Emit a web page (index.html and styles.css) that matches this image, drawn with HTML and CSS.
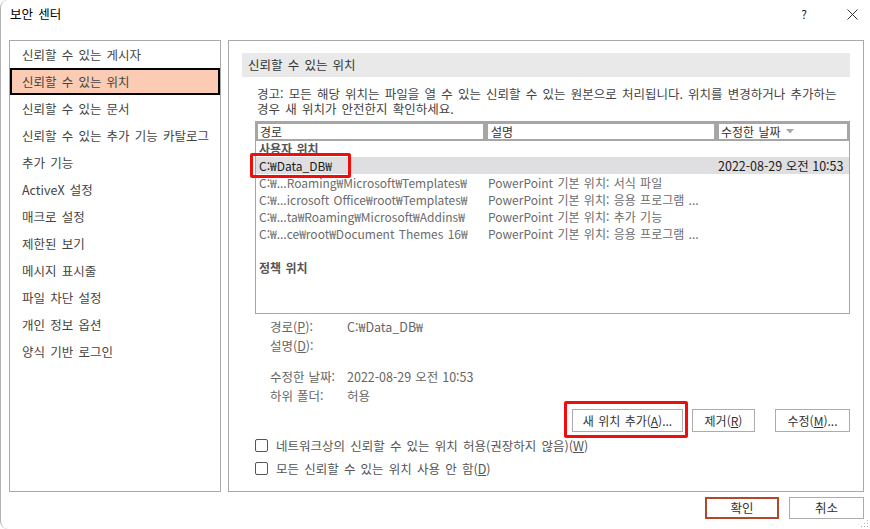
FILE: index.html
```html
<!DOCTYPE html>
<html lang="ko">
<head>
<meta charset="utf-8">
<title>보안 센터</title>
<link rel="stylesheet" href="styles.css">
</head>
<body>
<div class="window">
  <div class="titlebar">
    <span class="title">보안 센터</span>
    <span class="tb-buttons">
      <span class="tb-help">?</span>
      <svg class="tb-close" width="11" height="11" viewBox="0 0 11 11"><path d="M0.5 0.5 L10.5 10.5 M10.5 0.5 L0.5 10.5" stroke="#333" stroke-width="1" fill="none"/></svg>
    </span>
  </div>

  <div class="main">
    <ul class="nav">
      <li class="nav-item">신뢰할 수 있는 게시자</li>
      <li class="nav-item is-active">신뢰할 수 있는 위치</li>
      <li class="nav-item">신뢰할 수 있는 문서</li>
      <li class="nav-item">신뢰할 수 있는 추가 기능 카탈로그</li>
      <li class="nav-item">추가 기능</li>
      <li class="nav-item">ActiveX 설정</li>
      <li class="nav-item">매크로 설정</li>
      <li class="nav-item">제한된 보기</li>
      <li class="nav-item">메시지 표시줄</li>
      <li class="nav-item">파일 차단 설정</li>
      <li class="nav-item">개인 정보 옵션</li>
      <li class="nav-item">양식 기반 로그인</li>
    </ul>

    <section class="pane">
      <div class="pane-header">신뢰할 수 있는 위치</div>
      <div class="warning">
        <span class="warning-line">경고: 모든 해당 위치는 파일을 열 수 있는 신뢰할 수 있는 원본으로 처리됩니다. 위치를 변경하거나 추가하는</span>
        <span class="warning-line">경우 새 위치가 안전한지 확인하세요.</span>
      </div>

      <div class="list">
        <div class="list-head">
          <div class="th th-path">경로</div>
          <div class="th th-desc">설명</div>
          <div class="th th-date">수정한 날짜 <svg class="caret" width="8" height="5" viewBox="0 0 8 5"><path d="M0 0 H8 L4 4.5 Z" fill="#a8a8a8"/></svg></div>
        </div>
        <div class="list-body">
          <div class="group">사용자 위치</div>
          <div class="row is-selected">
            <span class="c-path">C:₩Data_DB₩</span><span class="c-desc"></span><span class="c-date">2022-08-29 오전 10:53</span>
            <span class="mark mark-row"></span>
          </div>
          <div class="row"><span class="c-path">C:₩...Roaming₩Microsoft₩Templates₩</span><span class="c-desc">PowerPoint 기본 위치: 서식 파일</span><span class="c-date"></span></div>
          <div class="row"><span class="c-path">C:₩...icrosoft Office₩root₩Templates₩</span><span class="c-desc">PowerPoint 기본 위치: 응용 프로그램 ...</span><span class="c-date"></span></div>
          <div class="row"><span class="c-path">C:₩...ta₩Roaming₩Microsoft₩Addins₩</span><span class="c-desc">PowerPoint 기본 위치: 추가 기능</span><span class="c-date"></span></div>
          <div class="row"><span class="c-path">C:₩...ce₩root₩Document Themes 16₩</span><span class="c-desc">PowerPoint 기본 위치: 응용 프로그램 ...</span><span class="c-date"></span></div>
          <div class="spacer"></div>
          <div class="group">정책 위치</div>
        </div>
      </div>

      <div class="details">
        <span class="d-label">경로(<u>P</u>):</span><span class="d-value">C:₩Data_DB₩</span>
        <span class="d-label">설명(<u>D</u>):</span><span class="d-value"></span>
        <span class="d-gap"></span>
        <span class="d-label">수정한 날짜:</span><span class="d-value">2022-08-29 오전 10:53</span>
        <span class="d-label">하위 폴더:</span><span class="d-value">허용</span>
      </div>

      <div class="actions">
        <button class="btn btn-add">새 위치 추가(<u>A</u>)...<span class="mark mark-btn"></span></button>
        <button class="btn btn-remove">제거(<u>R</u>)</button>
        <button class="btn btn-edit">수정(<u>M</u>)...</button>
      </div>

      <div class="checks">
        <label class="check"><span class="box"></span>네트워크상의 신뢰할 수 있는 위치 허용(권장하지 않음)(<u>W</u>)</label>
        <label class="check"><span class="box"></span>모든 신뢰할 수 있는 위치 사용 안 함(<u>D</u>)</label>
      </div>
    </section>
  </div>

  <div class="footer">
    <button class="btn btn-ok">확인</button>
    <button class="btn btn-cancel">취소</button>
  </div>

  <svg class="grip" width="8" height="8" viewBox="0 0 8 8">
    <rect x="6" y="0" width="1" height="1" fill="#b0b0b0"/>
    <rect x="3" y="3" width="1" height="1" fill="#b0b0b0"/>
    <rect x="6" y="3" width="1" height="1" fill="#b0b0b0"/>
    <rect x="0" y="6" width="1" height="1" fill="#b0b0b0"/>
    <rect x="3" y="6" width="1" height="1" fill="#b0b0b0"/>
    <rect x="6" y="6" width="1" height="1" fill="#b0b0b0"/>
  </svg>
</div>
</body>
</html>
```

FILE: styles.css
```css
* { box-sizing: border-box; }

html, body {
  margin: 0;
  padding: 0;
  background: #ffffff;
}

body {
  font-family: "Noto Sans CJK KR", "Noto Sans", sans-serif;
  font-size: 12.5px;
  word-spacing: 1.7px;
  color: #444;
}

.window {
  position: relative;
  width: 870px;
  height: 529px;
  overflow: hidden;
  background: #fff;
  border-left: 1px solid #b4b4b4;
  border-top-left-radius: 8px;
  border-bottom-left-radius: 8px;
}

/* Title bar */
.titlebar {
  height: 40px;
  display: flex;
  justify-content: space-between;
  align-items: flex-start;
  padding: 6px 12px 0 9px;
  line-height: 16px;
}
.title { color: #000; }
.tb-buttons {
  display: flex;
  align-items: center;
  gap: 40px;
  height: 16px;
}
.tb-help { color: #222; font-size: 12px; }
.tb-close { display: block; margin-top: 1px; }

/* Main */
.main {
  display: flex;
  gap: 7px;
  padding-left: 8px;
}

.nav {
  list-style: none;
  margin: 0;
  padding: 0;
  width: 212px;
  height: 452px;
  border: 1px solid #a9a9a9;
  flex: none;
}
.nav-item {
  height: 27px;
  line-height: 27px;
  padding-left: 12px;
  color: #444;
  white-space: nowrap;
}
.nav-item.is-active {
  background: #fbcbb3;
  border: 2px solid #000;
  padding-left: 10px;
  line-height: 23px;
}

.pane {
  width: 636px;
  height: 452px;
  border: 1px solid #a9a9a9;
  padding: 12px 13px 0 13px;
  flex: none;
}

.pane-header {
  height: 24px;
  line-height: 24px;
  background: #e9e9e9;
  padding-left: 6px;
  color: #333;
}

.warning {
  margin: 9px 0 0 0;
  padding-left: 15px;
  color: #444;
  white-space: nowrap;
}
.warning-line {
  display: block;
  height: 15px;
  line-height: 15px;
}

/* List */
.list {
  margin: 5px 0 0 13px;
  height: 193px;
  border: 1px solid #a6a6a6;
  font-size: 12px;
  word-spacing: 1px;
}
.list-head {
  display: flex;
  gap: 5px;
  background: #a6a6a6;
  padding: 2px 2px 2px 2px;
}
.th {
  background: #fff;
  height: 15px;
  line-height: 15px;
  padding-left: 2px;
  color: #333;
  white-space: nowrap;
}
.th-path { width: 225px; }
.th-desc { width: 226px; padding-left: 3px; }
.th-date { width: 128px; padding-left: 2px; display: flex; align-items: center; }
.caret { margin-left: 5px; }

.group {
  height: 16px;
  line-height: 15px;
  padding-left: 3px;
  font-weight: bold;
  color: #555;
}
.row {
  position: relative;
  display: flex;
  height: 17px;
  line-height: 17px;
  padding-left: 3px;
  color: #6b6b6b;
  white-space: nowrap;
}
.row.is-selected {
  background: #dfdfe2;
  color: #1a1a1a;
}
.c-path { width: 229px; overflow: hidden; }
.c-desc { width: 230px; overflow: hidden; }
.c-date { flex: 1; font-size: 12.5px; word-spacing: 0; }
.spacer { height: 18px; }

.mark {
  position: absolute;
  border: 3px solid #f20d0d;
  border-radius: 2px;
  pointer-events: none;
}
.mark-row {
  left: -6px;
  top: -4px;
  width: 101px;
  height: 25px;
}

/* Details */
.details {
  display: grid;
  grid-template-columns: 77px auto;
  grid-template-rows: 19px 19px 12px 19px 19px;
  line-height: 19px;
  margin: 3px 0 0 28px;
  color: #666;
  word-spacing: 0.5px;
}
.d-gap { grid-column: 1 / span 2; height: 12px; }

/* Buttons */
.actions {
  display: flex;
  justify-content: flex-end;
  margin-top: 4px;
}
.btn {
  font-family: inherit;
  font-size: 12px;
  word-spacing: 1px;
  color: #333;
  background: #fff;
  border: 1px solid #acacac;
  height: 23px;
  line-height: 21px;
  padding: 0;
  margin: 0;
  text-align: center;
}
.btn-add { position: relative; width: 111px; }
.btn-remove { width: 63px; margin-left: 9px; }
.btn-edit { width: 75px; margin-left: 20px; }
.mark-btn {
  left: -9px;
  top: -9px;
  right: -6px;
  bottom: -7px;
}

/* Checkboxes */
.checks {
  margin: 2px 0 0 13px;
}
.check {
  display: flex;
  align-items: center;
  height: 23px;
  color: #555;
  white-space: nowrap;
}
.box {
  width: 13px;
  height: 13px;
  border: 1px solid #555;
  border-radius: 2px;
  margin-right: 8px;
  flex: none;
}

/* Footer */
.footer {
  display: flex;
  justify-content: flex-end;
  gap: 10px;
  margin-top: 5px;
  padding-right: 6px;
}
.btn-ok {
  width: 74px;
  height: 22px;
  line-height: 18px;
  border: 2px solid #b4482f;
  font-size: 12.5px;
}
.btn-cancel {
  width: 75px;
  height: 22px;
  line-height: 20px;
  font-size: 12.5px;
}

.grip {
  position: absolute;
  right: 1px;
  bottom: 1px;
}
```
